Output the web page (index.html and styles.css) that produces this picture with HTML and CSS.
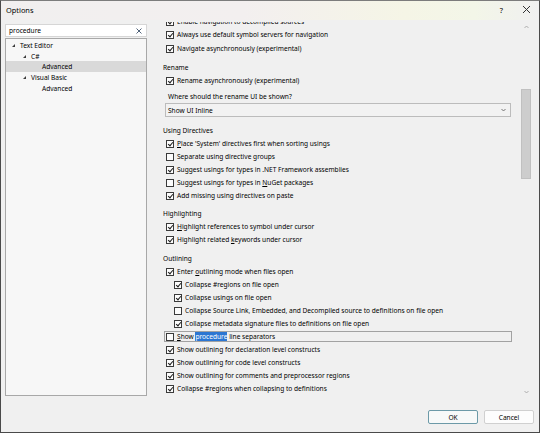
FILE: index.html
```html
<!DOCTYPE html>
<html lang="en">
<head>
    <meta charset="UTF-8">
    <title>Options</title>
    <link rel="stylesheet" href="styles.css">
</head>
<body>
    <div class="window">
        <div class="titlebar">
            <span class="title">Options</span>
            <span class="help">?</span>
            <svg class="close" width="9" height="9" viewBox="0 0 9 9"><path d="M1 1L8 8M8 1L1 8" stroke="#333" stroke-width="1"/></svg>
        </div>

        <div class="main">
            <div class="nav">
                <div class="search">
                    <span>procedure</span>
                    <svg width="6" height="6" viewBox="0 0 6 6"><path d="M0.5 0.5L5.5 5.5M5.5 0.5L0.5 5.5" stroke="#52647a" stroke-width="1"/></svg>
                </div>
                <ul class="tree">
                    <li class="lvl0"><i class="arrow"></i>Text Editor</li>
                    <li class="lvl1"><i class="arrow"></i>C#</li>
                    <li class="lvl2 selected">Advanced</li>
                    <li class="lvl1"><i class="arrow"></i>Visual Basic</li>
                    <li class="lvl2">Advanced</li>
                </ul>
            </div>

            <div class="page">
                <div class="scroller">
                    <div class="settings">
                        <div class="row"><span class="box on"></span>Enable navigation to decompiled sources</div>
                        <div class="row"><span class="box on"></span>Always use default symbol servers for navigation</div>
                        <div class="row spaced"><span class="box on"></span>Navigate asynchronously (experimental)</div>

                        <div class="heading">Rename</div>
                        <div class="row"><span class="box on"></span>Rename asynchronously (experimental)</div>
                        <div class="field-label">Where should the rename UI be shown?</div>
                        <div class="select">
                            <span>Show UI Inline</span>
                            <svg width="5" height="4" viewBox="0 0 5 4"><path d="M0.5 1L2.5 3L4.5 1" fill="none" stroke="#666" stroke-width="0.9"/></svg>
                        </div>

                        <div class="heading gap">Using Directives</div>
                        <div class="row"><span class="box on"></span><span><u>P</u>lace 'System' directives first when sorting usings</span></div>
                        <div class="row"><span class="box"></span>Separate using directive groups</div>
                        <div class="row"><span class="box on"></span>Suggest usings for types in .NET Framework assemblies</div>
                        <div class="row"><span class="box"></span><span>Suggest usings for types in <u>N</u>uGet packages</span></div>
                        <div class="row"><span class="box on"></span>Add missing using directives on paste</div>

                        <div class="heading tight">Highlighting</div>
                        <div class="row"><span class="box on"></span><span><u>H</u>ighlight references to symbol under cursor</span></div>
                        <div class="row"><span class="box on"></span><span>Highlight related <u>k</u>eywords under cursor</span></div>

                        <div class="heading">Outlining</div>
                        <div class="row"><span class="box on"></span><span>Enter <u>o</u>utlining mode when files open</span></div>
                        <div class="row sub"><span class="box on"></span>Collapse #regions on file open</div>
                        <div class="row sub"><span class="box on"></span>Collapse usings on file open</div>
                        <div class="row sub"><span class="box"></span>Collapse Source Link, Embedded, and Decompiled source to definitions on file open</div>
                        <div class="row sub"><span class="box on"></span>Collapse metadata signature files to definitions on file open</div>
                        <div class="row found"><span class="box"></span><span><u>S</u>how <mark>procedure</mark> line separators</span></div>
                        <div class="row"><span class="box on"></span>Show outlining for declaration level constructs</div>
                        <div class="row"><span class="box on"></span>Show outlining for code level constructs</div>
                        <div class="row"><span class="box on"></span>Show outlining for comments and preprocessor regions</div>
                        <div class="row"><span class="box on"></span>Collapse #regions when collapsing to definitions</div>
                    </div>
                </div>

                <div class="scrollbar">
                    <svg class="up" width="5" height="4" viewBox="0 0 5 4"><path d="M0.5 3L2.5 1L4.5 3" fill="none" stroke="#a6a6a6" stroke-width="0.9"/></svg>
                    <div class="thumb"></div>
                    <svg class="down" width="5" height="4" viewBox="0 0 5 4"><path d="M0.5 1L2.5 3L4.5 1" fill="none" stroke="#a6a6a6" stroke-width="0.9"/></svg>
                </div>
            </div>
        </div>

        <div class="buttons">
            <button class="btn default">OK</button>
            <button class="btn">Cancel</button>
        </div>
    </div>
</body>
</html>
```

FILE: styles.css
```css
* {
    box-sizing: border-box;
    font-family: 'Noto Sans', 'Open Sans', sans-serif;
}

body {
    margin: 0;
    width: 540px;
    height: 433px;
    background: #f0f0f0;
}

.window {
    height: 433px;
    border: 1px solid #4a4a4a;
    border-top-color: #7c7c7c;
    background: #f0f0f0;
    display: flex;
    flex-direction: column;
    font-size: 6.6px;
    color: #000;
}

/* title bar */
.titlebar {
    height: 19px;
    display: flex;
    align-items: center;
    padding: 0 8px 2px 5px;
    background: linear-gradient(90deg, #f1efef 0%, #f3efef 45%, #f5f5e6 75%, #f3f6e8 88%, #f0f0f0 100%);
}

.title {
    font-size: 7.4px;
    flex: 1;
}

.help {
    font-size: 7.4px;
    margin-right: 19px;
}

/* main area */
.main {
    height: 376px;
    display: flex;
    padding-left: 4px;
}

.nav {
    width: 142px;
    display: flex;
    flex-direction: column;
    padding-top: 4px;
}

.search {
    height: 13px;
    background: #fff;
    border: 1px solid #d6d6d6;
    display: flex;
    align-items: center;
    justify-content: space-between;
    padding: 0 4px 0 3px;
}

.tree {
    flex: 1;
    list-style: none;
    margin: 1px 0 0;
    padding: 1px 0 0;
    background: #f7f7f7;
    border: 1px solid #a8a8a8;
}

.tree li {
    height: 10.7px;
    display: flex;
    align-items: center;
}

.tree .lvl0 { padding-left: 6px; }
.tree .lvl1 { padding-left: 17px; }
.tree .lvl2 { padding-left: 36px; }

.tree .selected {
    background: #d9d9d9;
}

.arrow {
    width: 0;
    height: 0;
    border-left: 3px solid transparent;
    border-bottom: 3px solid #3c3c3c;
    margin-right: 5px;
}

/* settings page */
.page {
    display: flex;
    margin-left: 13px;
}

.scroller {
    width: 360px;
    height: 374px;
    margin-top: 2px;
    overflow: hidden;
}

.settings {
    margin-top: -7px;
}

.row {
    height: 13px;
    display: flex;
    align-items: center;
    padding-left: 6px;
    white-space: nowrap;
}

.row.spaced {
    margin-top: 1px;
}

.row.sub {
    padding-left: 14px;
}

.row.found {
    height: 11px;
    margin: 1px 0 1px 4px;
    width: 348px;
    padding-left: 1px;
    border: 1px solid #a2a2a2;
}

.box {
    width: 8px;
    height: 8px;
    border: 1px solid #3a3a3a;
    background: #fcfcfc;
    margin-right: 3px;
    flex-shrink: 0;
    position: relative;
}

.box.on::after {
    content: '';
    position: absolute;
    left: 2px;
    top: 0px;
    width: 2px;
    height: 4px;
    border-right: 1px solid #1e1e1e;
    border-bottom: 1px solid #1e1e1e;
    transform: rotate(40deg);
}

mark {
    background: #2c76d2;
    color: #fff;
}

.heading {
    height: 13px;
    margin-top: 6px;
    padding-left: 3px;
    display: flex;
    align-items: center;
}

.heading.gap {
    margin-top: 7px;
}

.heading.tight {
    margin-top: 5px;
}

.field-label {
    height: 13px;
    margin-top: 3px;
    padding-left: 8px;
    display: flex;
    align-items: center;
}

.select {
    height: 14px;
    margin-left: 5px;
    width: 346px;
    border: 1px solid #bcbcbc;
    background: #f2f2f2;
    display: flex;
    align-items: center;
    justify-content: space-between;
    padding: 0 4px 0 2px;
}

/* scrollbar */
.scrollbar {
    width: 10px;
    margin-left: 1px;
    position: relative;
}

.scrollbar .up {
    position: absolute;
    top: 5px;
    left: 3px;
}

.scrollbar .down {
    position: absolute;
    top: 370px;
    left: 3px;
}

.thumb {
    margin-top: 69px;
    height: 90px;
    background: #cdcdcd;
    border: 1px solid #c0c0c0;
}

/* dialog buttons */
.buttons {
    display: flex;
    justify-content: flex-end;
    gap: 6px;
    margin-top: 14px;
    padding-right: 5px;
}

.btn {
    width: 50px;
    height: 14px;
    padding: 0;
    font-size: 6.6px;
    color: #000;
    background: #fdfdfd;
    border: 1px solid #d0d0d0;
    border-radius: 2px;
}

.btn.default {
    border-color: #6c9aa8;
    background: #f7f9f9;
}
```
